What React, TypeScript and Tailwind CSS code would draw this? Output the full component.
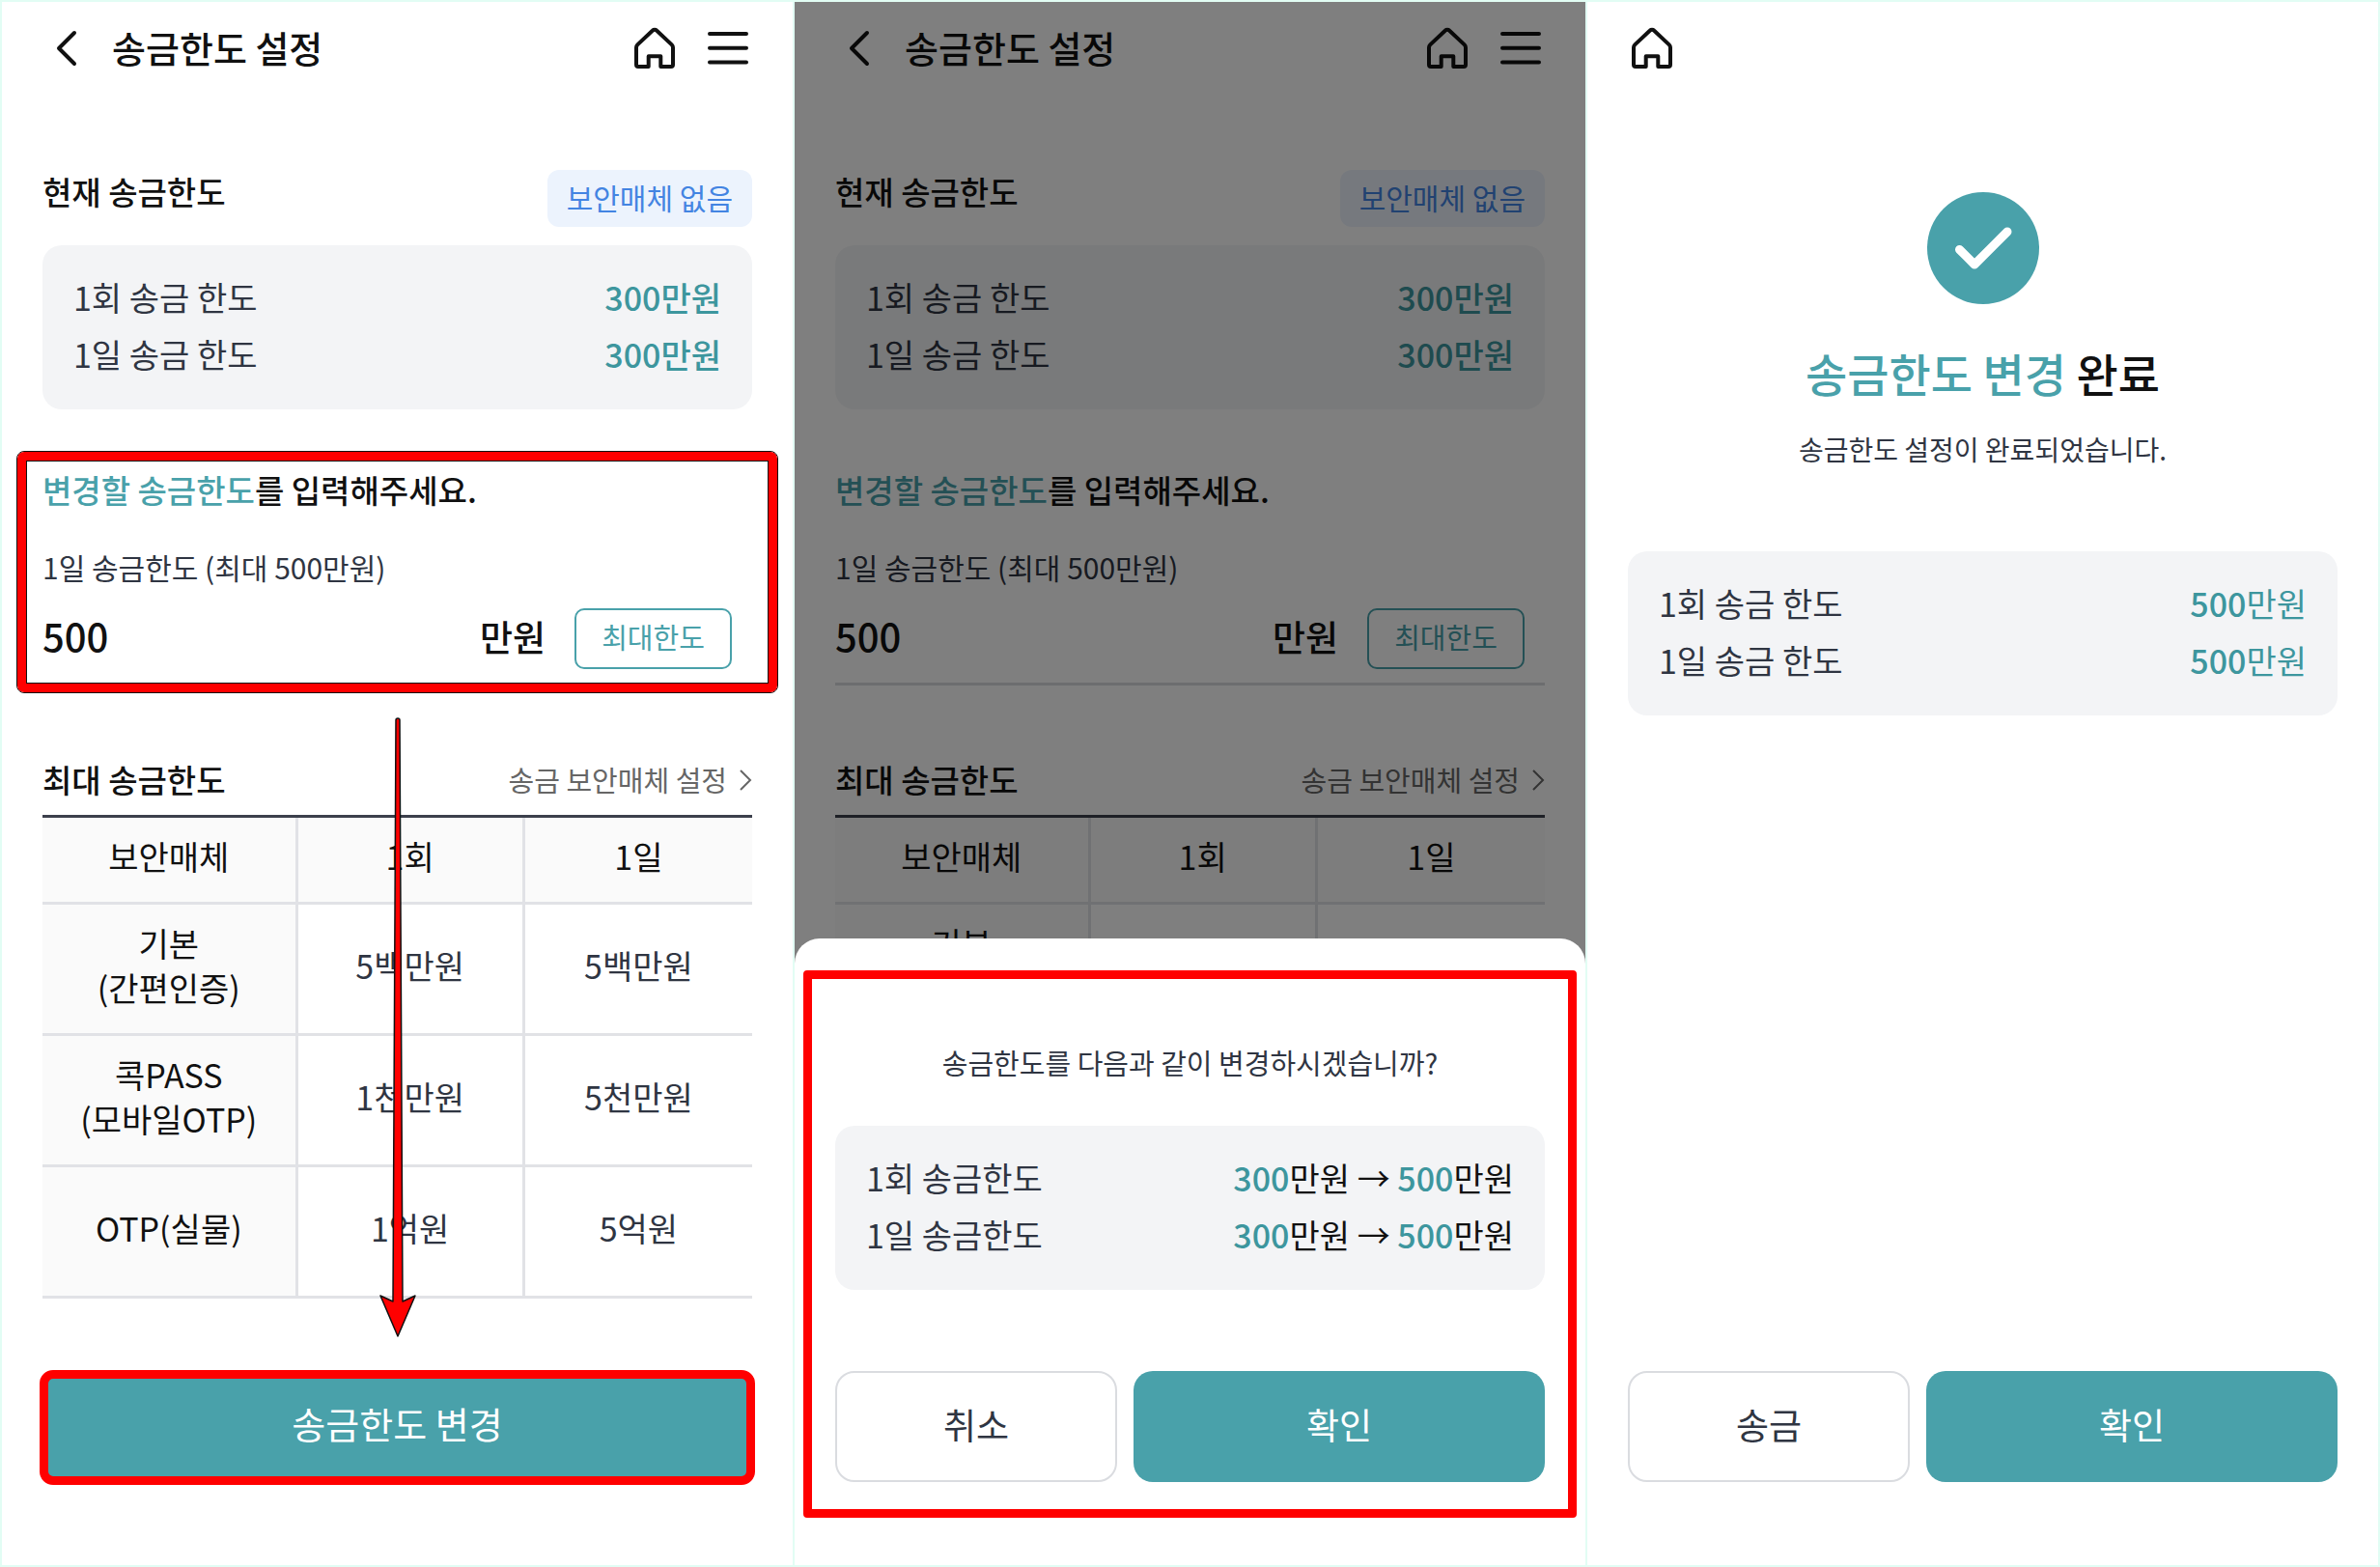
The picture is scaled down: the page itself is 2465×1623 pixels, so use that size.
import { useId } from 'react';
import type { ReactNode } from 'react';

type LimitRow = {
  label: string;
  value: ReactNode;
};

type MaxLimit = {
  medium: string[];
  once: string;
  daily: string;
};

const CURRENT_LIMITS: LimitRow[] = [
  { label: '1회 송금 한도', value: <span className="font-medium">300만원</span> },
  { label: '1일 송금 한도', value: <span className="font-medium">300만원</span> },
];

const CHANGED_LIMITS: LimitRow[] = [
  { label: '1회 송금 한도', value: <Amount value={500} /> },
  { label: '1일 송금 한도', value: <Amount value={500} /> },
];

const PENDING_LIMITS: LimitRow[] = [
  { label: '1회 송금한도', value: <AmountChange from={300} to={500} /> },
  { label: '1일 송금한도', value: <AmountChange from={300} to={500} /> },
];

const MAX_LIMITS: MaxLimit[] = [
  { medium: ['기본', '(간편인증)'], once: '5백만원', daily: '5백만원' },
  { medium: ['콕PASS', '(모바일OTP)'], once: '1천만원', daily: '5천만원' },
  { medium: ['OTP(실물)'], once: '1억원', daily: '5억원' },
];

function HomeIcon() {
  return (
    <svg width="44" height="44" viewBox="0 0 44 44" fill="none" aria-hidden="true">
      <path
        d="M20 3.5a2.800 2.800 0 0 1 4 0L39.800 18.400c.8.8 1.200 1.800 1.200 2.900V39a2 2 0 0 1-2 2H28.300V30.300H15.700V41H5a2 2 0 0 1-2-2V21.300c0-1.100.4-2.100 1.200-2.900z"
        stroke="#111"
        strokeWidth="4"
        strokeLinejoin="round"
      />
    </svg>
  );
}

function MenuIcon() {
  return (
    <svg width="44" height="44" viewBox="0 0 44 44" fill="none" aria-hidden="true">
      <path d="M3 7h38M3 21.700h38M3 36.400h38" stroke="#111" strokeWidth="4" strokeLinecap="round" />
    </svg>
  );
}

function BackIcon() {
  return (
    <svg width="24" height="38" viewBox="0 0 24 38" fill="none" aria-hidden="true">
      <path
        d="M21 3 5 19l16 16"
        stroke="#111"
        strokeWidth="4"
        strokeLinecap="round"
        strokeLinejoin="round"
      />
    </svg>
  );
}

function Amount({ value }: { value: number }) {
  return (
    <>
      <span className="font-medium">{value}</span>만원
    </>
  );
}

function AmountChange({ from, to }: { from: number; to: number }) {
  return (
    <span className="text-[#111]">
      <span className="font-medium text-[#3d969e]">{from}</span>만원 →{' '}
      <span className="font-medium text-[#3d969e]">{to}</span>만원
    </span>
  );
}

function LimitCard({ rows }: { rows: LimitRow[] }) {
  return (
    <dl className="flex h-[170px] flex-col rounded-[20px] bg-[#f3f4f6] px-8 pt-6 text-[34px] leading-[59px]">
      {rows.map((row) => (
        <div key={row.label} className="flex justify-between">
          <dt className="text-[#2f3542]">{row.label}</dt>
          <dd className="text-[#3d969e]">{row.value}</dd>
        </div>
      ))}
    </dl>
  );
}

function ActionPair({ cancelLabel }: { cancelLabel: string }) {
  return (
    <div className="grid grid-cols-[292px_1fr] gap-[17px] text-[37px]">
      <button
        type="button"
        className="h-[115px] rounded-[20px] border-2 border-[#dadce0] bg-white pb-1 text-[#2f3542]"
      >
        {cancelLabel}
      </button>
      <button type="button" className="h-[115px] rounded-[20px] bg-[#49a1aa] pb-1 text-white">
        확인
      </button>
    </div>
  );
}

function MaxLimitTable({ limits }: { limits: MaxLimit[] }) {
  return (
    <div className="border-t-[3px] border-[#3c404c]">
      <table className="w-full table-fixed border-separate border-spacing-0 text-center text-[34px] leading-[46px]">
        <colgroup>
          <col className="w-[36%]" />
          <col className="w-[32%]" />
          <col className="w-[32%]" />
        </colgroup>
        <thead>
          <tr className="h-[90px] bg-[#fafafa] text-[#111]">
            <th scope="col" className="border-r-[3px] border-b-[3px] border-[#e1e2e6] pb-2 font-normal">
              보안매체
            </th>
            <th scope="col" className="border-r-[3px] border-b-[3px] border-[#e1e2e6] pb-2 font-normal">
              1회
            </th>
            <th scope="col" className="border-b-[3px] border-[#e1e2e6] pb-2 font-normal">
              1일
            </th>
          </tr>
        </thead>
        <tbody>
          {limits.map((limit) => (
            <tr key={limit.medium[0]} className="h-[136px]">
              <th
                scope="row"
                className="border-r-[3px] border-b-[3px] border-[#e1e2e6] bg-[#fafafa] pb-2 font-normal text-[#111]"
              >
                {limit.medium.map((line) => (
                  <span key={line} className="block">
                    {line}
                  </span>
                ))}
              </th>
              <td className="border-r-[3px] border-b-[3px] border-[#e1e2e6] pb-2 text-[#2f3542]">
                {limit.once}
              </td>
              <td className="border-b-[3px] border-[#e1e2e6] pb-2 text-[#2f3542]">{limit.daily}</td>
            </tr>
          ))}
        </tbody>
      </table>
    </div>
  );
}

// Red frame with a thin dark line on both of its edges.
function GuideFrame() {
  return (
    <div className="pointer-events-none absolute -inset-x-[27px] -top-[16px] -bottom-[11px] rounded-lg border border-[#111]">
      <div className="h-full rounded-[7px] border-9 border-[#f00]">
        <div className="h-full border border-[#111]" />
      </div>
    </div>
  );
}

// Tapered guide arrow from the amount field down to the submit button.
function GuideArrow() {
  return (
    <svg
      className="pointer-events-none absolute top-[741px] left-1/2 -translate-x-1/2"
      width="40"
      height="644"
      viewBox="0 0 40 644"
      aria-hidden="true"
    >
      <path
        d="M18 3a2 2 0 0 1 4 0l3 602 13-6-18 42-18-42 13 6z"
        fill="#f00"
        stroke="#111"
        strokeWidth="1.5"
        strokeLinejoin="round"
      />
    </svg>
  );
}

function LimitSettings({ limits, annotated = false }: { limits: MaxLimit[]; annotated?: boolean }) {
  const amountId = useId();

  return (
    <div className="relative flex h-full flex-col px-[42px]">
      <header className="flex h-24 items-center pr-[3px] pl-3">
        <button type="button" aria-label="뒤로">
          <BackIcon />
        </button>
        <h1 className="ml-9 pb-1 text-[38px] font-medium text-[#111]">송금한도 설정</h1>
        <div className="ml-auto flex items-center gap-8">
          <button type="button" aria-label="홈">
            <HomeIcon />
          </button>
          <button type="button" aria-label="메뉴">
            <MenuIcon />
          </button>
        </div>
      </header>

      <section className="mt-[78px]">
        <div className="flex h-[59px] items-start justify-between">
          <h2 className="text-[33px] leading-[45px] font-medium text-[#111]">현재 송금한도</h2>
          <span className="h-[59px] rounded-xl bg-[#ecf3fd] px-5 text-[30px] leading-[57px] text-[#4384e2]">
            보안매체 없음
          </span>
        </div>
        <div className="mt-[19px]">
          <LimitCard rows={CURRENT_LIMITS} />
        </div>
      </section>

      <section className="relative mt-[59px] h-[227px] border-b-[3px] border-[#d9dbdf]">
        <h2 className="text-[33px] leading-[48px] font-medium text-[#111]">
          <span className="text-[#49a1aa]">변경할 송금한도</span>를 입력해주세요.
        </h2>
        <label
          htmlFor={amountId}
          className="mt-[34px] block text-[30px] leading-[45px] text-[#2f3542]"
        >
          1일 송금한도 (최대 500만원)
        </label>
        <div className="mt-5 flex h-[63px] items-center pr-[21px] text-[37px] font-medium text-[#111]">
          <input
            id={amountId}
            type="text"
            inputMode="numeric"
            defaultValue="500"
            className="w-0 min-w-0 flex-1 bg-transparent pb-2 text-[40px] outline-none"
          />
          <span className="pb-1">만원</span>
          <button
            type="button"
            className="ml-[30px] h-[63px] w-[163px] rounded-[10px] border-2 border-[#49a1aa] bg-white pb-1 text-[29px] font-normal text-[#49a1aa]"
          >
            최대한도
          </button>
        </div>
        {annotated && <GuideFrame />}
      </section>

      <section className="mt-[75px]">
        <div className="flex h-[59px] items-start justify-between leading-[45px]">
          <h2 className="text-[33px] font-medium text-[#111]">최대 송금한도</h2>
          <a href="#security" className="flex items-center gap-3 text-[29px] text-[#666]">
            송금 보안매체 설정
            <svg width="14" height="24" viewBox="0 0 14 24" fill="none" aria-hidden="true">
              <path d="m2 2 10 10L2 22" stroke="#666" strokeWidth="2" />
            </svg>
          </a>
        </div>
        <MaxLimitTable limits={limits} />
      </section>

      {annotated && (
        <>
          <div className="relative mt-auto mb-[86px]">
            <button
              type="button"
              className="block h-[115px] w-full rounded-[20px] bg-[#49a1aa] pb-2 text-[38px] text-white"
            >
              송금한도 변경
            </button>
            <div className="pointer-events-none absolute -inset-x-[3px] -top-px -bottom-[3px] rounded-[14px] border-9 border-[#f00]" />
          </div>
          <GuideArrow />
        </>
      )}
    </div>
  );
}

function ConfirmSheet() {
  return (
    <div
      role="dialog"
      aria-label="송금한도 변경 확인"
      className="absolute inset-x-0 bottom-0 rounded-t-[26px] bg-white px-[42px] pt-[105px] pb-[86px]"
    >
      <p className="text-center text-[29px] leading-[47px] text-[#2f3542]">
        송금한도를 다음과 같이 변경하시겠습니까?
      </p>
      <div className="mt-[42px] mb-[84px]">
        <LimitCard rows={PENDING_LIMITS} />
      </div>
      <ActionPair cancelLabel="취소" />
      <div className="pointer-events-none absolute inset-x-[9px] top-[33px] bottom-[49px] rounded-[4px] border-9 border-[#f00]" />
    </div>
  );
}

function ChangeComplete() {
  return (
    <div className="flex h-full flex-col px-[42px] pb-[86px]">
      <header className="flex h-24 items-center pl-[3px]">
        <button type="button" aria-label="홈">
          <HomeIcon />
        </button>
      </header>
      <div className="mt-[101px] flex flex-col items-center">
        <svg width="116" height="116" viewBox="0 0 116 116" fill="none" aria-hidden="true">
          <circle cx="58" cy="58" r="58" fill="#49a1aa" />
          <path
            d="m33.500 59.500 15.500 15.500 34-34"
            stroke="#fff"
            strokeWidth="9"
            strokeLinecap="round"
            strokeLinejoin="round"
          />
        </svg>
        <h1 className="mt-9 text-[47px] leading-[70px] font-medium text-[#111]">
          <span className="text-[#49a1aa]">송금한도 변경</span> 완료
        </h1>
        <p className="mt-5 text-[28px] leading-[48px] text-[#2f3542]">
          송금한도 설정이 완료되었습니다.
        </p>
      </div>
      <div className="mt-[82px]">
        <LimitCard rows={CHANGED_LIMITS} />
      </div>
      <div className="mt-auto">
        <ActionPair cancelLabel="송금" />
      </div>
    </div>
  );
}

export default function App() {
  return (
    <main className="grid min-h-screen grid-cols-3 border-y-2 border-r-2 border-[#e2fdf4] bg-white font-['Noto_Sans_CJK_KR',sans-serif]">
      <div className="border-l-2 border-[#e2fdf4]">
        <LimitSettings limits={MAX_LIMITS} annotated />
      </div>
      <div className="relative overflow-hidden border-l-2 border-[#e2fdf4]">
        <LimitSettings limits={MAX_LIMITS.slice(0, 1)} />
        <div className="absolute inset-0 bg-black/50" />
        <ConfirmSheet />
      </div>
      <div className="border-l-2 border-[#e2fdf4]">
        <ChangeComplete />
      </div>
    </main>
  );
}
